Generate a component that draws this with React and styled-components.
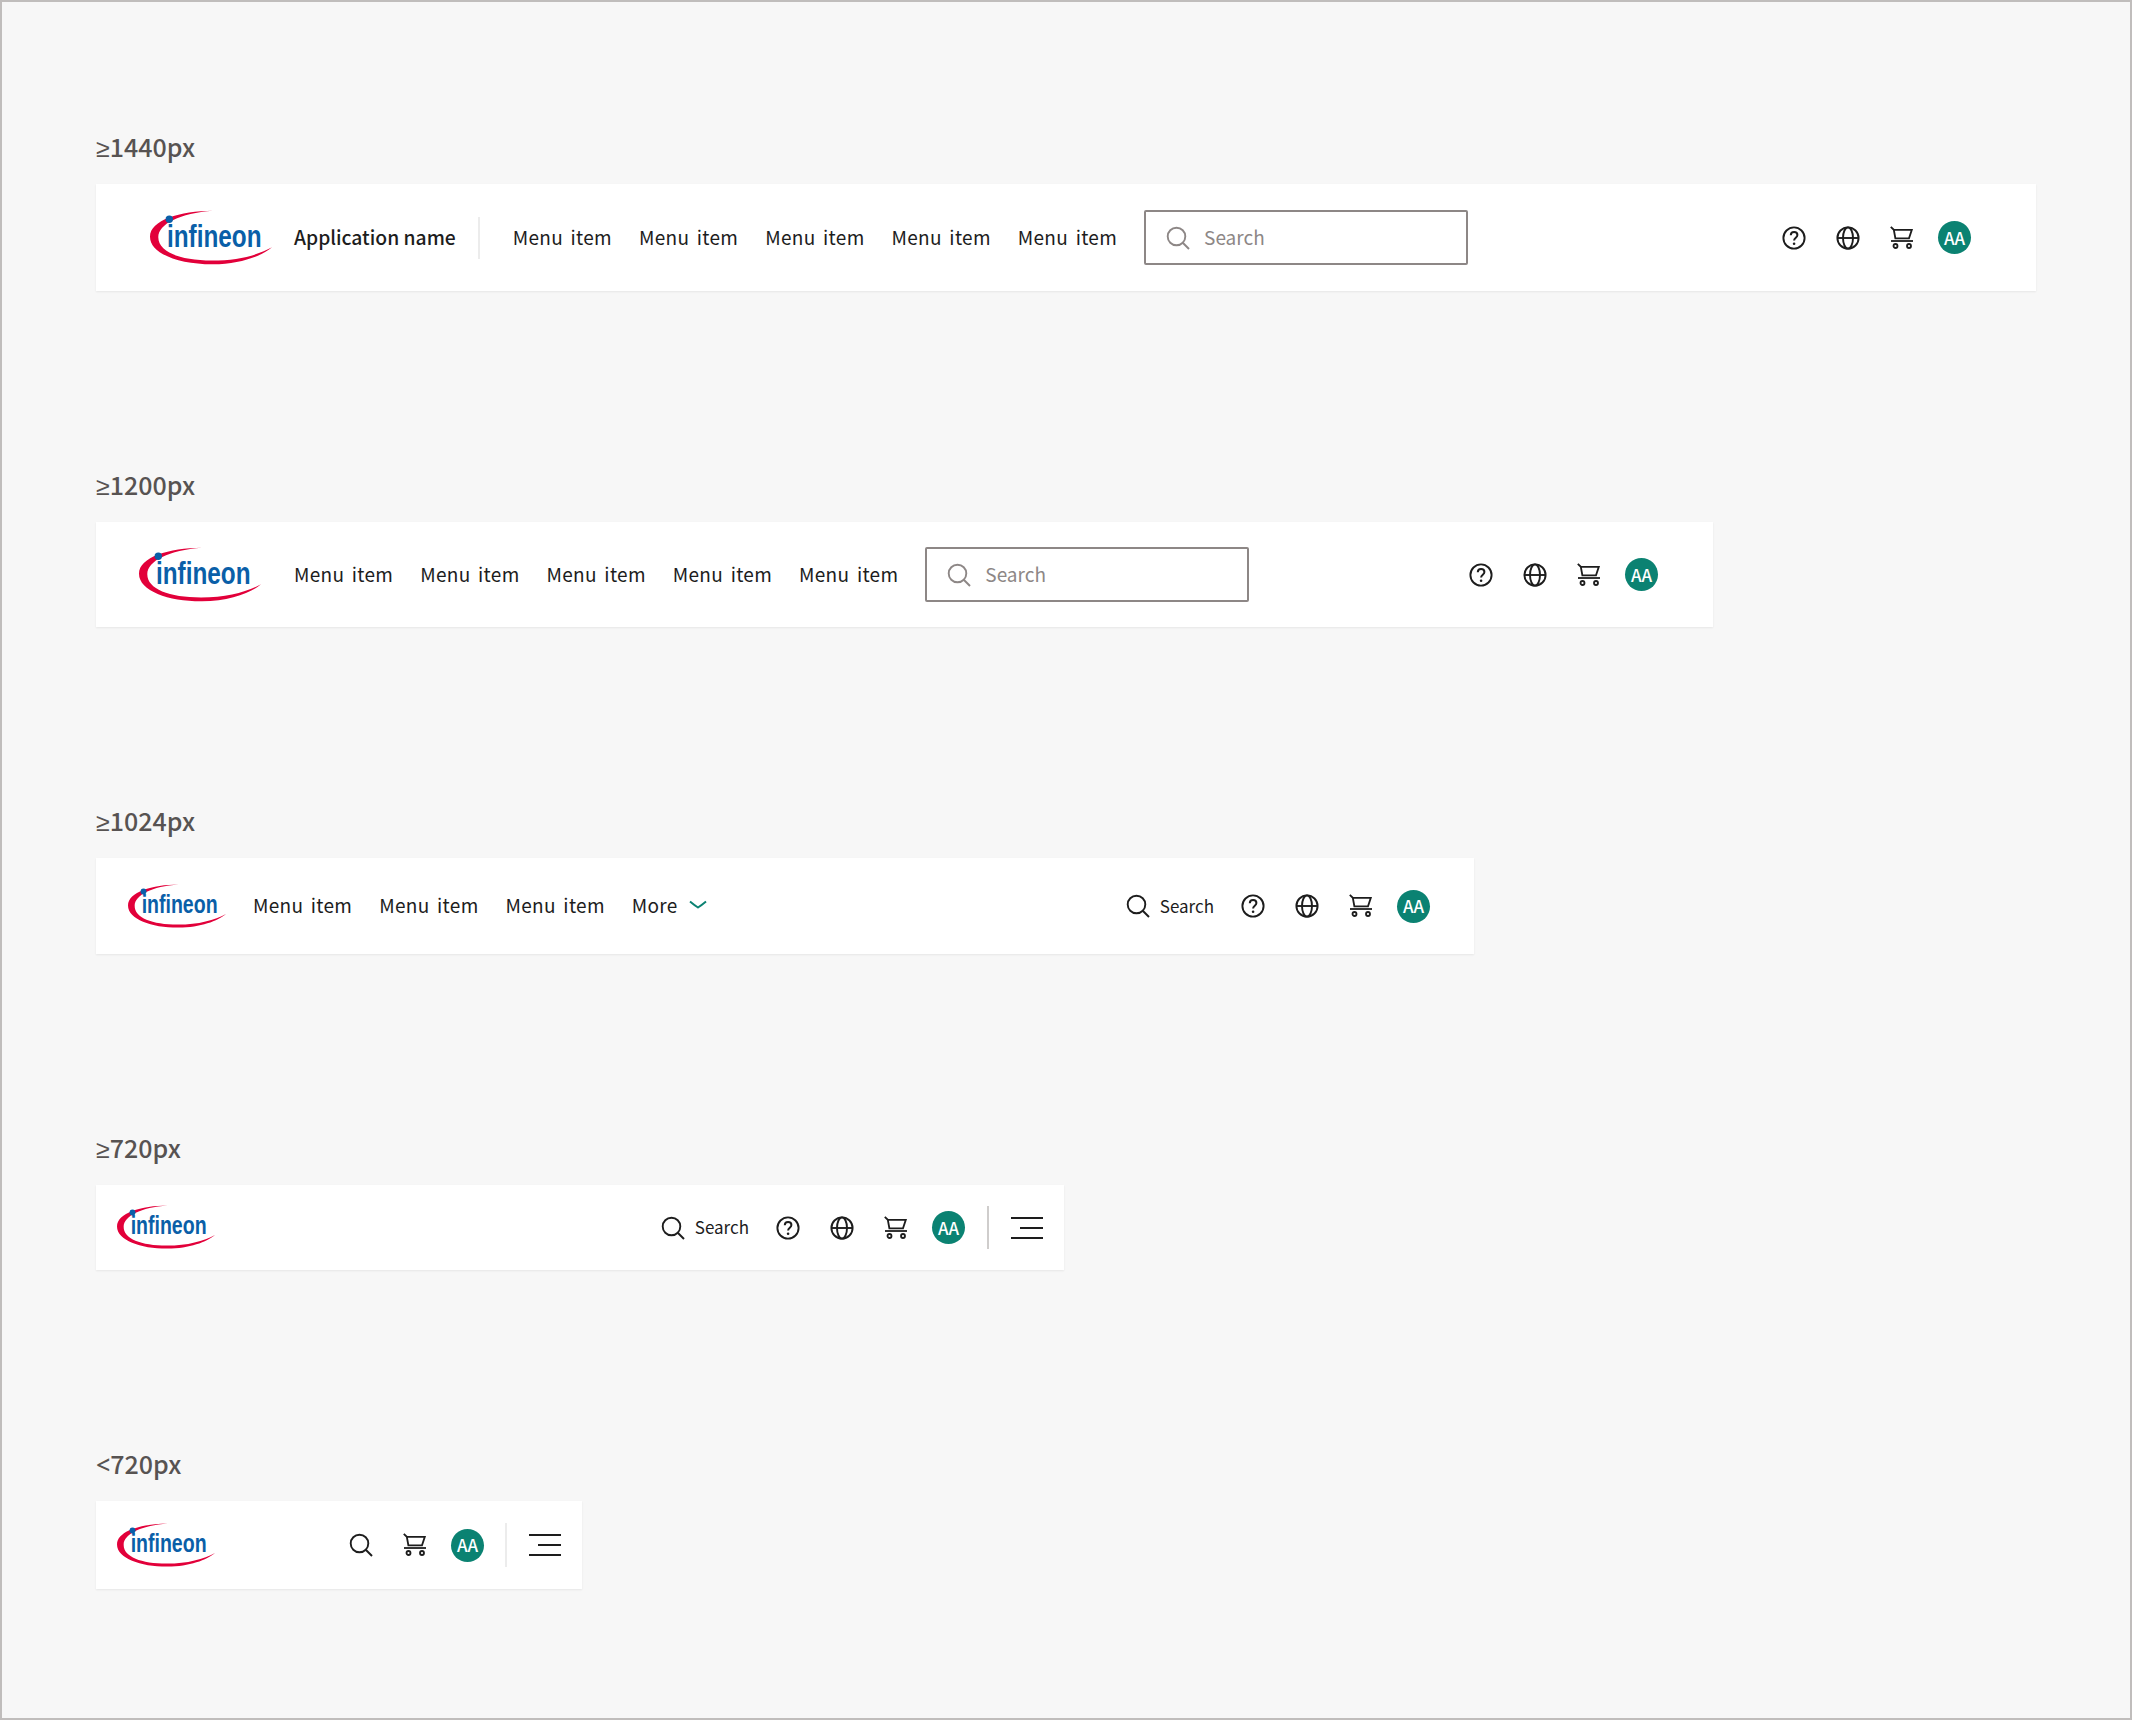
import styled, { createGlobalStyle } from 'styled-components'

const GlobalStyle = createGlobalStyle`
  * { box-sizing: border-box; }
  body {
    margin: 0;
    background: #f7f7f7;
    font-family: "Noto Sans CJK SC", "Noto Sans", sans-serif;
  }
`

const Logo = ({ width = 122 }) => (
  <LogoBox width={width} viewBox="0 0 122 55">
    <path
      fill="#e2003a"
      d="M63 .7C30 1 0 10 0 26.7 0 44 30 54.5 63 54.3c27-.3 49-8.300 59-17-14 7.700-34 13.200-60 13.200-32 0-54-8.500-53.700-23.500C8.500 14 30 3 63 .7Z"
    />
    <text
      transform="translate(17 36.700) scale(.76 1)"
      fontFamily="Liberation Sans, sans-serif"
      fontWeight="700"
      fontSize="32"
      fill="#0a5fa8"
    >
      infineon
    </text>
    <circle cx="19.300" cy="9.300" r="3.700" fill="#0a5fa8" />
  </LogoBox>
)

const SearchIcon = ({ color = '#1d1d1d' }) => (
  <IconSvg viewBox="0 0 24 24" fill="none" stroke={color} strokeWidth="1.900">
    <circle cx="10.500" cy="10.500" r="8.800" />
    <path d="M17 17l6 6" />
  </IconSvg>
)

const HelpIcon = () => (
  <IconSvg viewBox="0 0 24 24" fill="none" stroke="#1d1d1d" strokeWidth="1.900">
    <circle cx="12" cy="12" r="10.600" />
    <path d="M8.800 9.300c0-2 1.400-3.300 3.300-3.300s3.300 1.200 3.300 3c0 2.600-3.300 2.800-3.300 5.500" strokeWidth="2" />
    <circle cx="12.100" cy="17.800" r="1.300" fill="#1d1d1d" stroke="none" />
  </IconSvg>
)

const GlobeIcon = () => (
  <IconSvg viewBox="0 0 24 24" fill="none" stroke="#1d1d1d" strokeWidth="1.900">
    <circle cx="12" cy="12" r="10.600" />
    <ellipse cx="12" cy="12" rx="5" ry="10.600" />
    <path d="M1.400 12h21.200" />
  </IconSvg>
)

const CartIcon = () => (
  <IconSvg viewBox="0 0 24 24" fill="none" stroke="#1d1d1d" strokeWidth="1.800">
    <path d="M.8 .8l3 3L5.500 13M3.800 3.800H21.800L19 12.300H5.400" />
    <path d="M1 15h22" />
    <circle cx="5.500" cy="20" r="2" />
    <circle cx="19" cy="20" r="2" />
  </IconSvg>
)

const Utilities = ({ search, iconSearch, help = true, globe = true }) => (
  <UtilityRow>
    {search && (
      <SearchLink>
        <SearchIcon />
        <span>Search</span>
      </SearchLink>
    )}
    {iconSearch && <IconSlot><SearchIcon /></IconSlot>}
    {help && <IconSlot><HelpIcon /></IconSlot>}
    {globe && <IconSlot><GlobeIcon /></IconSlot>}
    <IconSlot><CartIcon /></IconSlot>
    <Avatar>AA</Avatar>
  </UtilityRow>
)

const Menu = ({ count = 5, more }) => (
  <MenuRow>
    {Array.from({ length: count }, (_, i) => (
      <MenuItem key={i}>Menu item</MenuItem>
    ))}
    {more && (
      <MoreItem>
        More
        <svg width="18" height="10" viewBox="0 0 18 10" fill="none" stroke="#0b8272" strokeWidth="2">
          <path d="M1 1.500c3 2.500 5.500 4.500 8 6 2.500-1.500 5-3.500 8-6" />
        </svg>
      </MoreItem>
    )}
  </MenuRow>
)

const Hamburger = () => (
  <BurgerButton>
    <BurgerLine />
    <BurgerLine short />
    <BurgerLine />
  </BurgerButton>
)

const Heading = ({ prefix, children }) => (
  <Label>
    <Sign>{prefix}</Sign>
    {children}
  </Label>
)

const App = () => (
  <>
    <GlobalStyle />
    <Frame>
      <Heading prefix="≥">1440px</Heading>
      <Bar width={1940} height={107} left={54} right={65}>
        <Logo />
        <AppName>Application name</AppName>
        <Divider tall={42} offset={22} />
        <MenuSlot left={33}><Menu /></MenuSlot>
        <SearchField>
          <SearchIcon color="#8d8786" />
          <span>Search</span>
        </SearchField>
        <Utilities />
      </Bar>

      <Heading prefix="≥">1200px</Heading>
      <Bar width={1617} height={105} left={43} right={55}>
        <Logo />
        <MenuSlot left={33}><Menu /></MenuSlot>
        <SearchField>
          <SearchIcon color="#8d8786" />
          <span>Search</span>
        </SearchField>
        <Utilities />
      </Bar>

      <Heading prefix="≥">1024px</Heading>
      <Bar width={1378} height={96} left={32} right={44}>
        <Logo width={98} />
        <MenuSlot left={27}><Menu count={3} more /></MenuSlot>
        <Utilities search />
      </Bar>

      <Heading prefix="≥">720px</Heading>
      <Bar width={968} height={85} left={21} right={21}>
        <Logo width={98} />
        <Utilities search />
        <Divider tall={43} offset={22} strong />
        <Hamburger />
      </Bar>

      <Heading prefix="<">720px</Heading>
      <Bar width={486} height={88} left={21} right={21}>
        <Logo width={98} />
        <Utilities iconSearch help={false} globe={false} />
        <Divider tall={44} offset={21} />
        <Hamburger />
      </Bar>
    </Frame>
  </>
)

const Frame = styled.div`
  width: 2132px;
  height: 1720px;
  border: 2px solid #c0bdbc;
  background: #f7f7f7;
  padding: 127px 0 0 94px;
  display: flex;
  flex-direction: column;
  align-items: flex-start;
`

const Label = styled.div`
  flex: none;
  font-size: 25px;
  line-height: 35px;
  font-weight: 500;
  color: #575352;
  margin-bottom: 19px;
`

const Sign = styled.span`
  font-family: "Noto Sans", sans-serif;
`

const Bar = styled.header`
  flex: none;
  display: flex;
  align-items: center;
  width: ${({ width }) => width}px;
  height: ${({ height }) => height}px;
  padding: 0 ${({ right }) => right}px 0 ${({ left }) => left}px;
  background: #fff;
  box-shadow: 0 1px 2px rgba(0, 0, 0, 0.07);
  margin-bottom: 176px;
`

const LogoBox = styled.svg`
  width: ${({ width }) => width}px;
  flex: none;
  display: block;
`

const AppName = styled.div`
  margin-left: 22px;
  padding-bottom: 2px;
  font-size: 19.300px;
  font-weight: 500;
  color: #1d1d1d;
  white-space: nowrap;
`

const Divider = styled.div`
  flex: none;
  width: 2px;
  height: ${({ tall }) => tall}px;
  margin-left: ${({ offset }) => offset}px;
  background: ${({ strong }) => (strong ? '#cfcdcc' : '#ececec')};
`

const MenuSlot = styled.nav`
  margin-left: ${({ left }) => left}px;
`

const MenuRow = styled.div`
  display: flex;
  align-items: center;
  gap: 27px;
`

const MenuItem = styled.span`
  padding-bottom: 3px;
  font-size: 19px;
  letter-spacing: 0.3px;
  word-spacing: 3px;
  color: #1d1d1d;
  white-space: nowrap;
`

const MoreItem = styled(MenuItem)`
  display: flex;
  align-items: center;
  gap: 11px;
`

const SearchField = styled.div`
  display: flex;
  align-items: center;
  width: 324px;
  height: 55px;
  margin-left: 27px;
  padding-left: 20px;
  gap: 14px;
  border: 2px solid #8d8786;
  border-radius: 2px;
  font-size: 19px;
  color: #8d8786;

  span {
    padding-bottom: 2px;
  }
`

const UtilityRow = styled.div`
  display: flex;
  align-items: center;
  margin-left: auto;
`

const SearchLink = styled.div`
  display: flex;
  align-items: center;
  gap: 10px;
  font-size: 17px;
  color: #1d1d1d;
  margin-right: 27px;

  span {
    padding-bottom: 2px;
    white-space: nowrap;
  }
`

const IconSvg = styled.svg`
  width: 24px;
  height: 24px;
  flex: none;
  display: block;
`

const IconSlot = styled.div`
  margin-right: 30px;
`

const Avatar = styled.div`
  width: 33px;
  height: 33px;
  margin-left: -6px;
  padding-bottom: 1px;
  border-radius: 50%;
  background: #0b8272;
  color: #fff;
  font-size: 17px;
  font-weight: 500;
  display: flex;
  align-items: center;
  justify-content: center;
`

const BurgerButton = styled.div`
  display: flex;
  flex-direction: column;
  align-items: flex-end;
  gap: 8px;
  width: 32px;
  margin-left: 22px;
`

const BurgerLine = styled.div`
  height: 2px;
  width: ${({ short }) => (short ? 23 : 32)}px;
  background: #1d1d1d;
`

export default App
